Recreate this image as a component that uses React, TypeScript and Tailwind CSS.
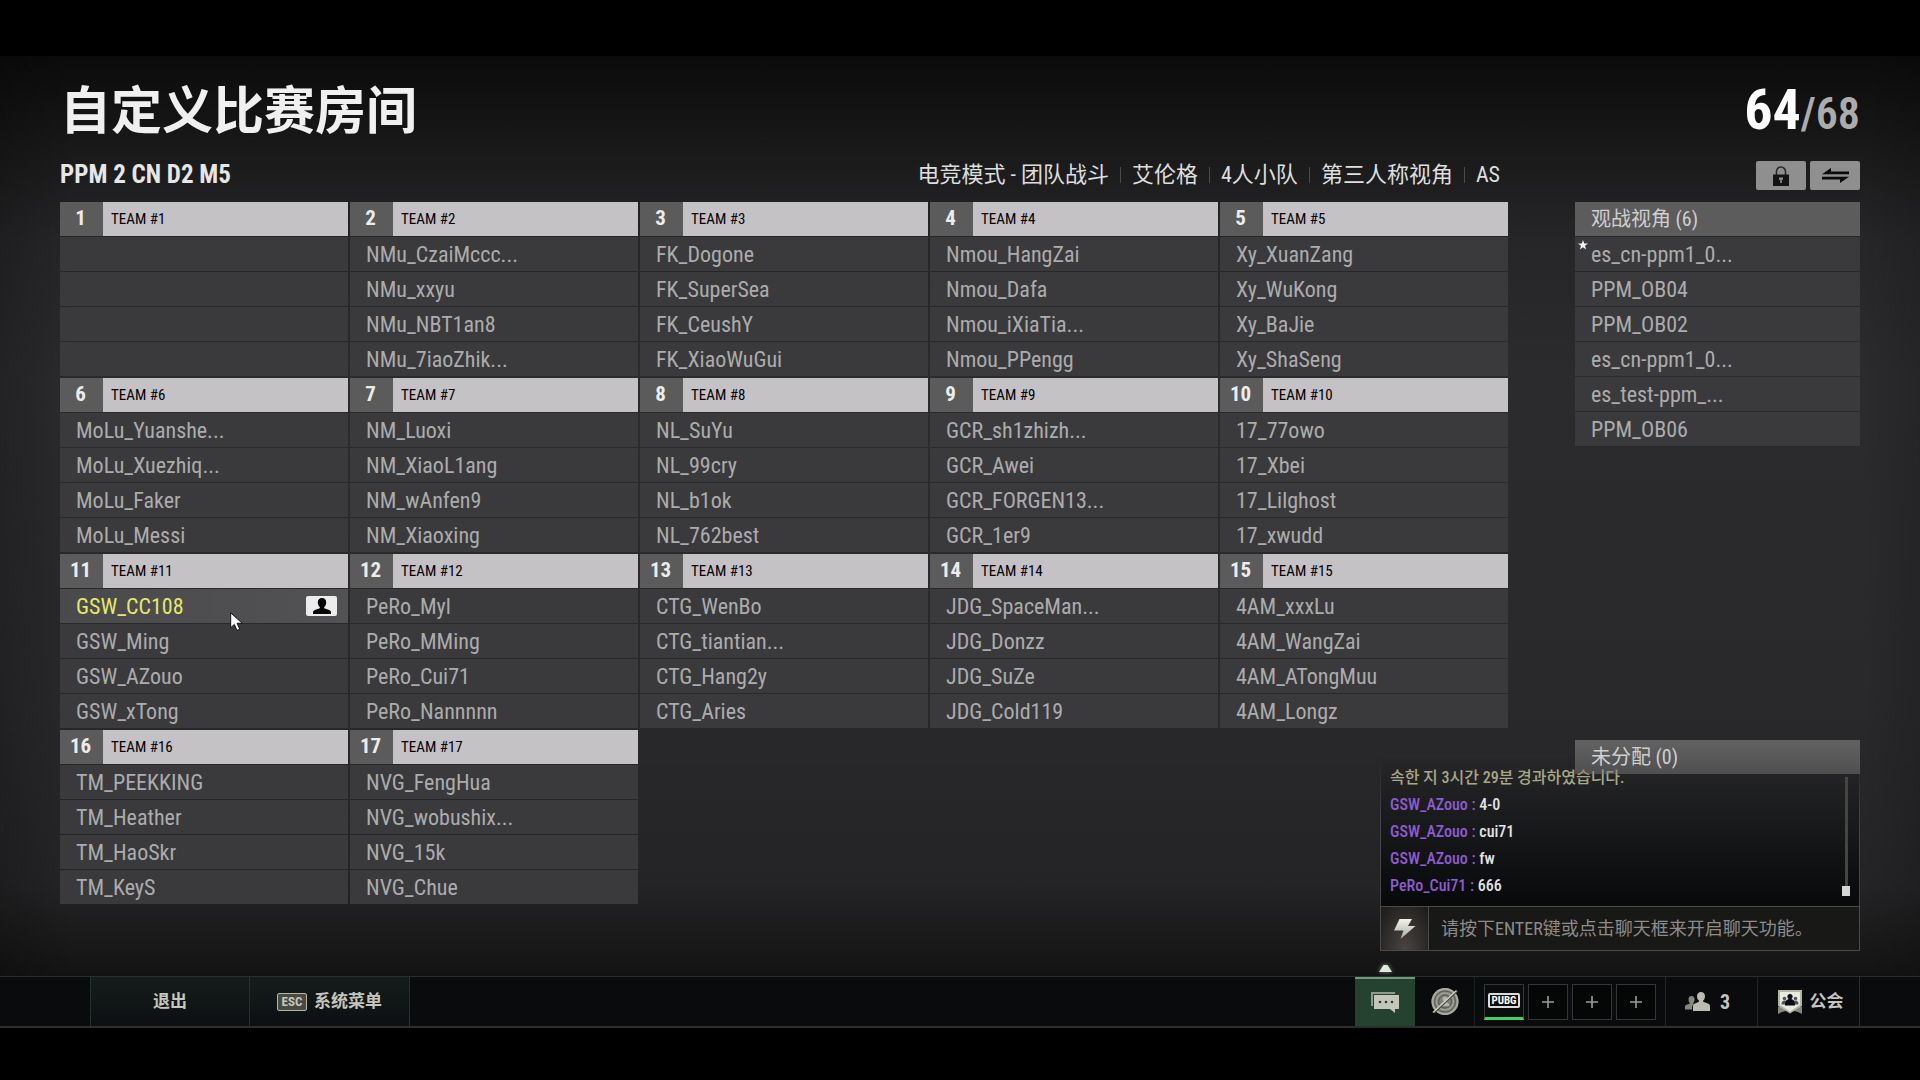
import { useState } from "react";
import clsx from "clsx";

type Team = {
  id: number;
  players: string[];
};

const teams: Team[] = [
  { id: 1, players: ["", "", "", ""] },
  { id: 2, players: ["NMu_CzaiMccc...", "NMu_xxyu", "NMu_NBT1an8", "NMu_7iaoZhik..."] },
  { id: 3, players: ["FK_Dogone", "FK_SuperSea", "FK_CeushY", "FK_XiaoWuGui"] },
  { id: 4, players: ["Nmou_HangZai", "Nmou_Dafa", "Nmou_iXiaTia...", "Nmou_PPengg"] },
  { id: 5, players: ["Xy_XuanZang", "Xy_WuKong", "Xy_BaJie", "Xy_ShaSeng"] },
  { id: 6, players: ["MoLu_Yuanshe...", "MoLu_Xuezhiq...", "MoLu_Faker", "MoLu_Messi"] },
  { id: 7, players: ["NM_Luoxi", "NM_XiaoL1ang", "NM_wAnfen9", "NM_Xiaoxing"] },
  { id: 8, players: ["NL_SuYu", "NL_99cry", "NL_b1ok", "NL_762best"] },
  { id: 9, players: ["GCR_sh1zhizh...", "GCR_Awei", "GCR_FORGEN13...", "GCR_1er9"] },
  { id: 10, players: ["17_77owo", "17_Xbei", "17_Lilghost", "17_xwudd"] },
  { id: 11, players: ["GSW_CC108", "GSW_Ming", "GSW_AZouo", "GSW_xTong"] },
  { id: 12, players: ["PeRo_Myl", "PeRo_MMing", "PeRo_Cui71", "PeRo_Nannnnn"] },
  { id: 13, players: ["CTG_WenBo", "CTG_tiantian...", "CTG_Hang2y", "CTG_Aries"] },
  { id: 14, players: ["JDG_SpaceMan...", "JDG_Donzz", "JDG_SuZe", "JDG_Cold119"] },
  { id: 15, players: ["4AM_xxxLu", "4AM_WangZai", "4AM_ATongMuu", "4AM_Longz"] },
  { id: 16, players: ["TM_PEEKKING", "TM_Heather", "TM_HaoSkr", "TM_KeyS"] },
  { id: 17, players: ["NVG_FengHua", "NVG_wobushix...", "NVG_15k", "NVG_Chue"] },
];

const observers = [
  "es_cn-ppm1_0...",
  "PPM_OB04",
  "PPM_OB02",
  "es_cn-ppm1_0...",
  "es_test-ppm_...",
  "PPM_OB06",
];

const settings = ["电竞模式 - 团队战斗", "艾伦格", "4人小队", "第三人称视角", "AS"];

const messages = [
  { from: "GSW_AZouo", text: "4-0" },
  { from: "GSW_AZouo", text: "cui71" },
  { from: "GSW_AZouo", text: "fw" },
  { from: "PeRo_Cui71", text: "666" },
];

const me = "GSW_CC108";

const LockIcon = () => (
  <svg width="16" height="20" viewBox="0 0 16 20">
    <path d="M3.5 9V5.5a4.5 4.5 0 0 1 9 0V9" fill="none" stroke="#2a2a2a" strokeWidth="1.6" />
    <path d="M0 8.5h16V20H0z" fill="#141414" />
    <path d="M6 11.5h4v2.2H8.8V17H7.2v-3.3H6z" fill="#8f8f8f" />
  </svg>
);

const SwapIcon = () => (
  <svg width="27" height="15" viewBox="0 0 27 15">
    <path d="M0 6.2 9 0v3.6h18v2.6z" fill="#0a0a0a" />
    <path d="M27 8.8 18 15v-3.600H0V8.800z" fill="#0a0a0a" />
  </svg>
);

const PersonIcon = () => (
  <svg width="18" height="16" viewBox="0 0 18 16">
    <path
      d="M9 0c2.6 0 4.2 1.8 4.2 4.4 0 2-.9 3.7-2 4.6v1.3l5 1.8c1.2.5 1.8 1.4 1.8 2.6V16H0v-1.3c0-1.2.6-2.1 1.8-2.6l5-1.8V9c-1.100-.9-2-2.600-2-4.600C4.800 1.800 6.400 0 9 0z"
      fill="#050505"
    />
  </svg>
);

const StarIcon = () => (
  <svg width="10" height="10" viewBox="0 0 20 20">
    <path d="m10 0 2.500 7H20l-6 4.600L16.200 19 10 14.500 3.800 19 6 11.600 0 7h7.500z" fill="#f2f2f2" />
  </svg>
);

const BoltIcon = () => (
  <svg width="22" height="20" viewBox="0 0 22 20">
    <defs>
      <linearGradient id="bolt" x1="0" y1="0" x2="0" y2="1">
        <stop offset="0" stopColor="#f1f3ea" />
        <stop offset="1" stopColor="#a9ada2" />
      </linearGradient>
    </defs>
    <path d="M5.500 0H18l-4 7h7.500L6.500 20l3-8.500H0z" fill="url(#bolt)" />
  </svg>
);

const ChatIcon = () => (
  <svg width="28" height="21" viewBox="0 0 28 21">
    <path d="M0 0h24v2H2v12H0z" fill="#8e9a8c" />
    <path d="M3 3h25v14h-4v4l-5-4H3z" fill="#c3c6b8" />
    <g fill="#2d3a31">
      <circle cx="9" cy="10" r="1.300" />
      <circle cx="15" cy="10" r="1.300" />
      <circle cx="21" cy="10" r="1.300" />
    </g>
  </svg>
);

const RadarIcon = () => (
  <svg width="28" height="28" viewBox="0 0 28 28" fill="none">
    <circle cx="14" cy="13.500" r="13.500" fill="#7f8078" />
    <circle cx="14" cy="13.500" r="12.500" stroke="#a9aaa0" strokeWidth="2" />
    <circle cx="14" cy="13.500" r="8.500" stroke="#a0a197" strokeWidth="1.500" />
    <circle cx="14" cy="13.500" r="10.500" stroke="#5c5d56" />
    <circle cx="14" cy="13.500" r="6.500" stroke="#55564f" />
    <circle cx="14" cy="11" r="2.500" fill="#b4b5aa" />
    <path d="M9.500 18c.5-3 2-4 4.500-4s4 1 4.500 4z" fill="#b4b5aa" />
    <path d="M3 25 26.500 3" stroke="#45463f" strokeWidth="1.600" />
    <path d="M2 24.500 25.500 2.500" stroke="#cfd0c5" strokeWidth="1.400" />
  </svg>
);

const FriendsIcon = () => (
  <svg width="25" height="19" viewBox="0 0 25 19">
    <path
      d="M6.500 4C8.600 4 9.600 5.500 9.600 7.500c0 1.400-.5 2.500-1.200 3.300v1L9 12c-1.500 1-2 2-2 5.500H0V15c0-1.200.5-2 1.500-2.300l3.200-1v-.9C4 10 3.500 9 3.500 7.500 3.500 5.500 4.500 4 6.500 4z"
      fill="#85867f"
    />
    <path
      d="M16 0c2.500 0 4 1.800 4 4.200 0 1.700-.7 3.300-1.800 4.200v1.400l4.800 1.700c1.300.5 2 1.500 2 2.800V19H8v-4.700c0-1.300.7-2.300 2-2.800l3.900-1.700V8.400C12.700 7.500 12 5.900 12 4.200 12 1.800 13.500 0 16 0z"
      fill="#babbb2"
    />
  </svg>
);

const GuildIcon = () => (
  <svg width="24" height="24" viewBox="0 0 24 24">
    <path d="M0 17h5l3 4-4 1-4 2zM24 17h-5l-3 4 4 1 4 2z" fill="#85867c" />
    <path d="M0 0h24v16l-12 7.500L0 16z" fill="#b4b5a8" />
    <path d="M2 2h20v13l-10 6.500L2 15z" fill="#e8e9df" />
    <g fill="#50555c">
      <circle cx="6.500" cy="8.500" r="1.800" />
      <circle cx="17.500" cy="8.500" r="1.800" />
      <path d="M3.500 14.500c0-3 1-4 3-4s3 1 3 4zM14.500 14.500c0-3 1-4 3-4s3 1 3 4z" />
    </g>
    <g fill="#0b0d16">
      <circle cx="12" cy="6.500" r="2.600" />
      <path d="M7 15.500c0-4.500 1.500-6.500 5-6.500s5 2 5 6.500z" />
    </g>
  </svg>
);

const PlusIcon = () => (
  <svg width="12" height="12" viewBox="0 0 12 12">
    <path d="M6 0v12M0 6h12" stroke="#9b9b96" strokeWidth="1.600" />
  </svg>
);

const Cursor = () => (
  <svg
    className="pointer-events-none absolute left-[59%] top-[23px] z-20"
    width="15"
    height="20"
    viewBox="0 0 15 20"
  >
    <path
      d="M.7.800v15l3.600-3.400 2.700 6 2.800-1.200-2.700-5.900h5.200z"
      fill="#fff"
      stroke="#111"
      strokeWidth="1"
    />
  </svg>
);

const TeamCard = ({ team }: { team: Team }) => {
  return (
    <section className="flex flex-col gap-px">
      <div className="flex h-[34px] items-center bg-[#c5c2c6]">
        <span className="flex h-full w-[43px] items-center justify-center bg-[#5b5b5b] pr-[2px] text-[21px] font-bold text-[#ececec]">
          {team.id}
        </span>
        <h2 className="px-2 text-[15px] text-black">TEAM #{team.id}</h2>
      </div>
      <ul className="flex flex-col gap-px">
        {team.players.map((player, index) => (
          <li
            key={index}
            className={clsx(
              "relative flex h-[34px] items-center justify-between pl-4 pr-[11px] text-[22px]",
              player === me
                ? "bg-linear-to-r from-[#4a4a4c] to-[#525254] text-[#e6e868]"
                : "bg-[#3a3a3c] text-[#acacac]"
            )}
          >
            <span>{player}</span>
            {player === me && (
              <>
                <span className="flex h-5 w-[31px] items-center justify-center rounded-xs bg-[#ececec]">
                  <PersonIcon />
                </span>
                <Cursor />
              </>
            )}
          </li>
        ))}
      </ul>
    </section>
  );
};

const Chat = () => {
  const [message, setMessage] = useState<string>("");

  return (
    <div className="absolute bottom-[25px] right-[60px] w-[480px]">
      <div className="relative flex h-[150px] flex-col justify-end overflow-hidden bg-linear-to-b from-transparent via-[#17181a] to-[#07090a] pb-[7px] pl-[10px] text-base font-medium leading-[27px]">
        <div className="absolute inset-0 border-x border-[#444444] mask-t-from-60%"></div>
        <p className="text-[#a9a884]">속한 지 3시간 29분 경과하였습니다.</p>
        {messages.map((item, index) => (
          <p key={index} className="text-[#e4e4e4]">
            <span className="text-[#8f5bd0]">{item.from} :</span> {item.text}
          </p>
        ))}
      </div>
      {/* Scrollbar */}
      <div className="absolute right-[10px] top-[21px] flex flex-col items-center">
        <div className="h-[109px] w-[3px] bg-[#45453d]"></div>
        <div className="h-[10px] w-2 bg-[#d6d6d6]"></div>
      </div>
      <div className="flex h-[45px] border border-[#4a4a48] bg-[#181817]">
        <button
          type="button"
          aria-label="chat"
          className="flex w-[48px] items-center justify-center border-r border-[#4a4a48] bg-radial-[at_50%_100%] from-[#4a4440] to-[#1c1b1a]"
        >
          <BoltIcon />
        </button>
        <input
          type="text"
          aria-label="message"
          value={message}
          onChange={(e) => setMessage(e.target.value)}
          placeholder="请按下ENTER键或点击聊天框来开启聊天功能。"
          className="min-w-0 flex-1 px-3 text-lg text-[#d0d0d0] outline-none placeholder:text-[#8c8c8a]"
        />
      </div>
    </div>
  );
};

const Footer = () => {
  return (
    <footer className="flex h-[52px] justify-between border-b-2 border-t border-b-[#2e2e2e] border-t-[#26302c] bg-[#0a0b0d] text-[17px] font-bold text-[#c4c5bc]">
      <div className="ml-[90px] flex divide-x divide-[#26302d] border-x border-[#26302d] bg-linear-to-b from-[#151d1b] to-[#0d0f12]">
        <button type="button" className="w-[159px]">
          退出
        </button>
        <button type="button" className="flex w-[159px] items-center justify-center gap-[7px]">
          <span className="flex h-[18px] w-[30px] items-center justify-center rounded-xs border border-[#b5b6a8] bg-[#4a4b40] text-[13px]">
            ESC
          </span>
          系统菜单
        </button>
      </div>

      <div className="mr-[60px] flex border-r border-[#26302d]">
        <button
          type="button"
          aria-label="messages"
          className="relative flex w-[60px] items-center justify-center border-t-2 border-[#6f9a80] bg-[#24422f]"
        >
          <ChatIcon />
          <svg className="absolute -top-[14px] drop-shadow-[0_0_2px_#ffffff80]" width="13" height="7" viewBox="0 0 13 7">
            <path d="M4.500 0h4L13 7H0z" fill="#dfeadd" />
          </svg>
        </button>
        <button type="button" aria-label="radar" className="flex w-[60px] items-center justify-center border-r border-[#1c2220]">
          <RadarIcon />
        </button>
        <div className="flex items-center gap-1 px-[9px]">
          <button
            type="button"
            className="flex h-9 w-10 items-center justify-center border border-b-[3px] border-[#34363a] border-b-[#41cf68] bg-[#0b0c0c]"
          >
            <span className="rounded-xs border-2 border-[#dcdcdc] px-px text-[11px] leading-[11px] text-white">
              PUBG
            </span>
          </button>
          {[1, 2, 3].map((slot) => (
            <button
              key={slot}
              type="button"
              aria-label={`slot ${slot}`}
              className="flex h-9 w-10 items-center justify-center border border-[#34363a] bg-[#050606]"
            >
              <PlusIcon />
            </button>
          ))}
        </div>
        <button type="button" className="flex w-[93px] items-center justify-center gap-[10px] border-x border-[#1f2725] pr-2 text-xl">
          <FriendsIcon />3
        </button>
        <button type="button" className="flex w-[101px] items-center justify-center gap-2 pl-1">
          <GuildIcon />
          公会
        </button>
      </div>
    </footer>
  );
};

const App = () => {
  return (
    <div className="flex min-h-screen flex-col bg-black pt-14 pb-[52px] font-['Roboto_Condensed','Noto_Sans_CJK_SC',sans-serif]">
      <main className="relative flex flex-1 flex-col bg-[linear-gradient(90deg,#00000033,transparent_4%,transparent_97%,#00000022),linear-gradient(#0b0b0b,#1a1a1b_11%,#262628_20%,#2b2b2d_35%,#29292b_70%,#242426_90%,#131313)] px-[60px] pt-7">
        <header className="flex h-14 items-center justify-between">
          <h1 className="text-[51px] font-bold leading-[56px] text-[#f0f0f0]">自定义比赛房间</h1>
          <p className="text-[56px] font-bold leading-[56px] text-white">
            64<span className="text-[44px] font-semibold text-[#acacac]">/68</span>
          </p>
        </header>

        <div className="mt-5 flex h-[42px] justify-between gap-[67px]">
          <div className="flex h-[29px] flex-1 items-center justify-between">
            <p className="text-[25px] font-bold text-[#e6e6e6]">PPM 2 CN D2 M5</p>
            <ul className="flex items-center divide-x divide-[#4a4a4a] text-[22px] leading-4 text-[#dedede]">
              {settings.map((item) => (
                <li key={item} className="px-[11px] last:pr-2">
                  {item}
                </li>
              ))}
            </ul>
          </div>
          <div className="flex w-[285px] items-start justify-end gap-1 pt-px">
            <button
              type="button"
              aria-label="lock"
              className="flex h-[29px] w-[50px] items-center justify-center rounded-xs bg-[#8f8f8f]"
            >
              <LockIcon />
            </button>
            <button
              type="button"
              aria-label="swap"
              className="flex h-[29px] w-[50px] items-center justify-center rounded-xs bg-[#8f8f8f]"
            >
              <SwapIcon />
            </button>
          </div>
        </div>

        <Chat />

        <div className="flex gap-[67px] pb-[69px]">
          <div className="grid flex-1 grid-cols-5 gap-[2px]">
            {teams.map((team) => (
              <TeamCard key={team.id} team={team} />
            ))}
          </div>

          <aside className="pointer-events-none relative flex w-[285px] flex-col justify-between">
            <section className="flex flex-col gap-px">
              <h2 className="flex h-[34px] items-center bg-[#5c5c5c] pl-4 text-xl text-[#cfcfcf]">
                观战视角 (6)
              </h2>
              <ul className="flex flex-col gap-px">
                {observers.map((name, index) => (
                  <li
                    key={index}
                    className="relative flex h-[34px] items-center bg-[#3a3a3c] pl-4 text-[22px] text-[#acacac]"
                  >
                    {index === 0 && (
                      <span className="absolute left-[3px] top-[3px]">
                        <StarIcon />
                      </span>
                    )}
                    {name}
                  </li>
                ))}
              </ul>
            </section>
            <section className="h-[164px]">
              <h2 className="flex h-[34px] items-center bg-linear-to-b from-[#7a7a7a]/70 to-[#7a7a7a]/50 pl-4 text-xl text-[#cfcfcf]">
                未分配 (0)
              </h2>
            </section>
          </aside>
        </div>
      </main>
      <Footer />
    </div>
  );
};

export default App;
